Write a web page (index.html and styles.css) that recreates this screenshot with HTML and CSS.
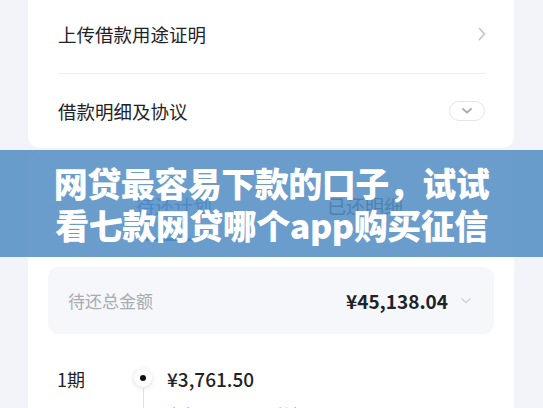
FILE: index.html
```html
<!DOCTYPE html>
<html lang="zh-CN">
<head>
  <meta charset="UTF-8" />
  <meta name="viewport" content="width=device-width, initial-scale=1.0"/>
  <title>借款详情</title>
  <link rel="stylesheet" href="styles.css">
</head>
<body>
  <div class="page">
    <div class="card card-top">
      <div class="row row-first">
        <span class="row-title">上传借款用途证明</span>
        <svg class="arrow-right" width="8" height="14" viewBox="0 0 8 14">
          <path d="M1.5 1.5 L6.5 7 L1.5 12.5" fill="none" stroke="#c3c6ce" stroke-width="1.8" stroke-linecap="round" stroke-linejoin="round"/>
        </svg>
      </div>
      <div class="row row-second">
        <span class="row-title">借款明细及协议</span>
        <span class="toggle">
          <svg width="12" height="8" viewBox="0 0 12 8">
            <path d="M2 2 L6 5.5 L10 2" fill="none" stroke="#a9adb8" stroke-width="2" stroke-linecap="round" stroke-linejoin="round"/>
          </svg>
        </span>
      </div>
    </div>

    <div class="card card-plan">
      <div class="tabs">
        <div class="tab tab-active">待还计划<span class="tab-line"></span></div>
        <div class="tab">已还明细</div>
      </div>

      <div class="total">
        <span class="total-label">待还总金额</span>
        <span class="total-value">¥45,138.04</span>
        <svg class="total-arrow" width="10" height="6" viewBox="0 0 10 6">
          <path d="M1 1 L5 4.5 L9 1" fill="none" stroke="#cdd0d6" stroke-width="1.4" stroke-linecap="round" stroke-linejoin="round"/>
        </svg>
      </div>

      <div class="period">
        <div class="period-name">1期</div>
        <div class="period-dot"><span class="dot"></span><span class="dot-line"></span></div>
        <div class="period-amount">¥3,761.50</div>
      </div>
      <div class="period-sub">
        <div class="period-date">2024/03/28</div>
        <div class="period-gap"></div>
        <div class="period-detail">本金 ¥3,521.30　利息 ¥240.20</div>
      </div>
    </div>
  </div>

  <div class="banner">
    <p>网贷最容易下款的口子，试试</p>
    <p>看七款网贷哪个app购买征信</p>
  </div>
</body>
</html>
```

FILE: styles.css
```css
* {
  box-sizing: border-box;
}

body {
  margin: 0;
  background: #f2f4f9;
  font-family: "Noto Sans CJK SC", "Noto Sans", sans-serif;
  color: #1f2329;
  overflow: hidden;
}

.page {
  padding: 0 29px 0 28px;
}

.card {
  background: #fff;
}

.card-top {
  border-radius: 0 0 12px 12px;
  padding: 0 29px 0 30px;
  height: 148px;
}

.row {
  display: flex;
  align-items: center;
  justify-content: space-between;
}

.row-first {
  height: 74px;
  padding-bottom: 6px;
  border-bottom: 1px solid #eceef2;
}

.row-second {
  height: 74px;
}

.row-title {
  font-size: 18.5px;
  color: #1f2329;
}

.arrow-right {
  margin-right: -1px;
}

.toggle {
  width: 36px;
  height: 20px;
  border: 1px solid #e3e5eb;
  border-radius: 10px;
  display: flex;
  align-items: center;
  justify-content: center;
}

.card-plan {
  margin-top: 4px;
  border-radius: 12px 12px 0 0;
  height: 300px;
}

.tabs {
  display: flex;
  gap: 115px;
  padding: 40px 0 0 108px;
  height: 92px;
}

.tab {
  position: relative;
  font-size: 19px;
  line-height: 28px;
  color: #333840;
}

.tab-active {
  color: #2f6fd8;
}

.tab-line {
  position: absolute;
  left: 10px;
  right: 10px;
  top: 46px;
  height: 3px;
  border-radius: 2px;
  background: #2f6fd8;
}

.total {
  margin: 23px 20px 0;
  height: 67px;
  background: #f6f7fa;
  border-radius: 10px;
  display: flex;
  align-items: center;
  padding: 0 23px 0 20px;
}

.total-label {
  font-size: 17px;
  color: #a8abb2;
  flex: 1;
}

.total-value {
  font-size: 19px;
  font-weight: 700;
  color: #1f2329;
  margin-right: 13px;
}

.period,
.period-sub {
  display: flex;
  padding-left: 29px;
}

.period {
  padding-top: 31px;
  line-height: 28px;
}

.period-name {
  width: 76px;
  font-size: 18px;
}

.period-dot {
  position: relative;
  width: 20px;
  height: 28px;
  margin-right: 14px;
}

.dot {
  position: absolute;
  left: 1px;
  top: 4px;
  width: 18px;
  height: 18px;
  border-radius: 50%;
  background: #fff;
  box-shadow: 0 1px 5px rgba(40, 60, 110, 0.18);
}

.dot::after {
  content: "";
  position: absolute;
  left: 6px;
  top: 6px;
  width: 6px;
  height: 6px;
  border-radius: 50%;
  background: #111;
}

.dot-line {
  position: absolute;
  left: 10px;
  top: 23px;
  width: 1px;
  height: 60px;
  background: #dde0e6;
}

.period-amount {
  font-size: 19px;
  font-weight: 500;
  color: #1f2329;
}

.period-sub {
  padding-top: 10px;
  font-size: 14px;
  color: #a2a5ad;
}

.period-date {
  width: 76px;
}

.period-gap {
  width: 34px;
}

.banner {
  position: absolute;
  left: 0;
  right: 0;
  top: 150px;
  height: 107px;
  background: rgba(82, 141, 195, 0.86);
  display: flex;
  flex-direction: column;
  justify-content: center;
  align-items: center;
}

.banner p {
  margin: 0;
  color: #fff;
  font-size: 34px;
  font-weight: 900;
  line-height: 42px;
  letter-spacing: -0.5px;
}
```
